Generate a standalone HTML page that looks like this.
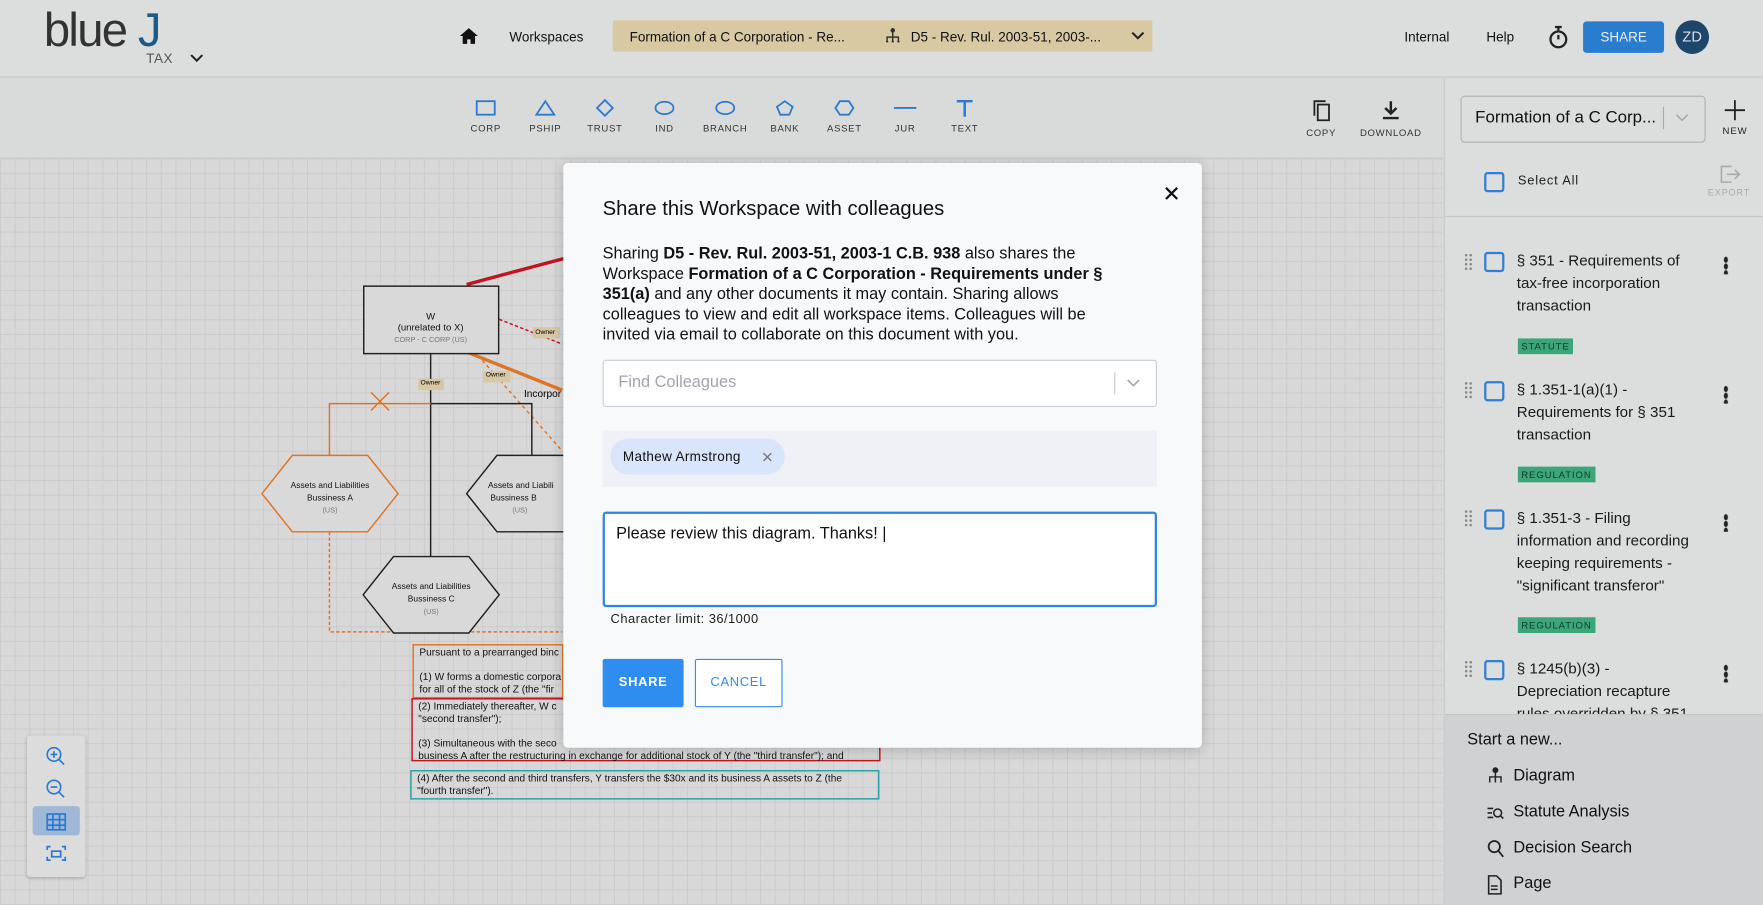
<!DOCTYPE html>
<html><head><meta charset="utf-8"><style>
*{box-sizing:border-box;margin:0;padding:0}
html,body{width:1763px;height:905px;overflow:hidden;background:#d9dada;font-family:"Liberation Sans",sans-serif}
#w{position:absolute;left:0;top:0;width:1568px;height:805px;transform:scale(1.12436);transform-origin:0 0;background:#d9dada}
.a{position:absolute}
.hdr{left:0;top:0;width:1568px;height:69px;background:#dcdddd;border-bottom:1px solid #c6c7c8}
.t{font-size:12px;color:#111}
.tb{left:0;top:70px;width:1283px;height:71px;background:#d9dada;border-bottom:1px solid #ccc}
.canvas{left:0;top:141px;width:1283px;height:664px;background-color:#d8d8d8;background-image:linear-gradient(#cbcbcb 1px,transparent 1px),linear-gradient(90deg,#cbcbcb 1px,transparent 1px);background-size:13px 13px}
.tool{position:absolute;top:88px;width:50px;text-align:center;font-size:8.5px;letter-spacing:.6px;color:#333}
.tool svg{display:block;margin:0 auto 5px}
.rp{left:1284px;top:70px;width:284px;height:735px;background:#dcdddd;border-left:1px solid #c6c7c8}
.cb{position:absolute;width:18px;height:18px;border:2px solid #2f7fd6;border-radius:3px}
.it{position:absolute;left:1349px;font-size:13.5px;line-height:20px;color:#1a1a1a;width:160px}
.tag{position:absolute;left:1350px;font-size:8.5px;letter-spacing:.8px;padding:2px 3px;background:#3aa67a;color:#0e3a2a}
.dots{position:absolute;left:1302px;width:8px;height:16px;background-image:radial-gradient(#888 1px,transparent 1.3px);background-size:4px 4px}
.kb{position:absolute;left:1533px;width:4px;height:16px;background-image:radial-gradient(#222 1.6px,transparent 2px);background-size:4px 6px}
.modal{left:501px;top:145px;width:568px;height:520px;background:#f8f9fb;border-radius:4px;box-shadow:0 2px 12px rgba(0,0,0,.2)}
.sm{font-size:7.5px;color:#111;text-align:center}
.box{position:absolute;font-size:9px;color:#111;line-height:11px;padding:2px 6px;overflow:hidden;white-space:nowrap}
</style></head><body><div id="w">
<div class="a hdr"></div>
<div class="a" style="left:39px;top:3px;font-size:42px;letter-spacing:-1.5px;color:#333">blue <span style="color:#1e5a86">J</span></div>
<div class="a" style="left:130px;top:45px;font-size:12px;color:#555;letter-spacing:.5px">TAX</div>
<svg class="a" style="left:169px;top:48px" width="12" height="8"><path d="M1 1l5 5 5-5" stroke="#222" stroke-width="1.8" fill="none"/></svg>
<svg class="a" style="left:408px;top:24px" width="18" height="16"><path d="M9 1L1 8h2.5v7h4v-4h3v4h4V8H17z" fill="#111"/></svg>
<div class="a t" style="left:453px;top:26px">Workspaces</div>
<div class="a" style="left:545px;top:18px;width:480px;height:28px;background:#d9c9a3;border-radius:2px"></div>
<div class="a t" style="left:560px;top:26px">Formation of a C Corporation - Re...</div>
<svg class="a" style="left:786px;top:24px" width="16" height="16"><path d="M8 1v5M3 13V9h10v4M8 6v7M2 13h2M7 13h2M12 13h2" stroke="#333" stroke-width="1.3" fill="none"/><circle cx="8" cy="3" r="2" fill="#333"/></svg>
<div class="a t" style="left:810px;top:26px">D5 - Rev. Rul. 2003-51, 2003-...</div>
<svg class="a" style="left:1006px;top:28px" width="12" height="8"><path d="M1 1l5 5 5-5" stroke="#222" stroke-width="1.8" fill="none"/></svg>
<div class="a t" style="left:1249px;top:26px">Internal</div>
<div class="a t" style="left:1322px;top:26px">Help</div>
<svg class="a" style="left:1376px;top:22px" width="20" height="22"><path d="M7 2h6M10 2v3" stroke="#222" stroke-width="2"/><circle cx="10" cy="13" r="7" stroke="#222" stroke-width="2" fill="none"/><path d="M10 13V9" stroke="#222" stroke-width="2"/></svg>
<div class="a" style="left:1408px;top:19px;width:72px;height:28px;background:#2a7ccf;border-radius:3px;color:#e8f0fa;font-size:12px;text-align:center;line-height:28px">SHARE</div>
<div class="a" style="left:1490px;top:18px;width:30px;height:30px;border-radius:50%;background:#1c466a;color:#dde;font-size:13px;text-align:center;line-height:30px">ZD</div>

<div class="a tb"></div>
<div class="a canvas"></div>
<div class="tool" style="left:407px"><svg width="20" height="16"><rect x="2" y="2" width="16" height="12" stroke="#2a7bd0" stroke-width="1.6" fill="none"/></svg>CORP</div>
<div class="tool" style="left:460px"><svg width="20" height="16"><path d="M10 2L2 14h16z" stroke="#2a7bd0" stroke-width="1.6" fill="none"/></svg>PSHIP</div>
<div class="tool" style="left:513px"><svg width="20" height="16"><path d="M10 1l7 7-7 7-7-7z" stroke="#2a7bd0" stroke-width="1.6" fill="none"/></svg>TRUST</div>
<div class="tool" style="left:566px"><svg width="20" height="16"><ellipse cx="10" cy="8" rx="8" ry="5.5" stroke="#2a7bd0" stroke-width="1.6" fill="none"/></svg>IND</div>
<div class="tool" style="left:620px"><svg width="20" height="16"><ellipse cx="10" cy="8" rx="8" ry="5.5" stroke="#2a7bd0" stroke-width="1.6" fill="none"/></svg>BRANCH</div>
<div class="tool" style="left:673px"><svg width="20" height="16"><path d="M10 2l7 5-3 7H6L3 7z" stroke="#2a7bd0" stroke-width="1.6" fill="none"/></svg>BANK</div>
<div class="tool" style="left:726px"><svg width="20" height="16"><path d="M6 2h8l4 6-4 6H6L2 8z" stroke="#2a7bd0" stroke-width="1.6" fill="none"/></svg>ASSET</div>
<div class="tool" style="left:780px"><svg width="22" height="16"><path d="M1 8h20" stroke="#2a7bd0" stroke-width="1.6"/></svg>JUR</div>
<div class="tool" style="left:833px"><svg width="20" height="16"><path d="M3 2h14M10 2v14" stroke="#2a7bd0" stroke-width="2.2"/></svg>TEXT</div>
<div class="tool" style="left:1150px"><svg width="20" height="20"><rect x="7" y="5" width="10" height="14" stroke="#222" stroke-width="1.6" fill="none"/><path d="M4 15V2h10" stroke="#222" stroke-width="1.6" fill="none"/></svg>COPY</div>
<div class="tool" style="left:1207px;width:60px"><svg width="20" height="20"><path d="M10 2v10M5 8l5 5 5-5M3 17h14" stroke="#222" stroke-width="2.2" fill="none"/></svg>DOWNLOAD</div>

<svg class="a" style="left:0;top:141px" width="1283" height="664">
<path d="M415 112L505 88" stroke="#c0141f" stroke-width="3"/>
<path d="M444 143L500 165" stroke="#c0141f" stroke-width="1.3" stroke-dasharray="3 2"/>
<path d="M415 172L500 206" stroke="#e07426" stroke-width="3"/>
<path d="M425 175L500 260" stroke="#e07426" stroke-width="1.3" stroke-dasharray="3 3"/>
<path d="M383 173V354M383 218H473V264" stroke="#222" stroke-width="1.3" fill="none"/>
<path d="M383 218H293V264" stroke="#e07426" stroke-width="1.3" fill="none"/>
<path d="M330 208l16 16M346 208l-16 16" stroke="#e07426" stroke-width="1.3"/>
<path d="M293 327V421H500" stroke="#e07426" stroke-width="1.3" stroke-dasharray="3 2" fill="none"/>
<rect x="323.5" y="113.5" width="120" height="60" fill="#d9d9d9" stroke="#222" stroke-width="1.3"/>
<path d="M260 264h67l27 34-27 34h-67l-27-34z" fill="#d9d9d9" stroke="#e07426" stroke-width="1.3"/>
<path d="M442 264h60v68h-60l-27-34z" fill="#d9d9d9" stroke="#222" stroke-width="1.3"/>
<path d="M350 354h67l27 34-27 34h-67l-27-34z" fill="#d9d9d9" stroke="#222" stroke-width="1.3"/>
<rect x="474" y="150" width="24" height="10" fill="#d6c8a3"/>
<rect x="372" y="196" width="23" height="10" fill="#d6c8a3"/>
<rect x="430" y="189" width="24" height="10" fill="#d6c8a3"/>
<rect x="367.5" y="432.5" width="133" height="47" fill="none" stroke="#e07426" stroke-width="1.3"/>
<rect x="366.5" y="480.5" width="416" height="55" fill="none" stroke="#c0141f" stroke-width="1.3"/>
<rect x="365.5" y="544.5" width="416" height="25" fill="none" stroke="#2aa0a8" stroke-width="1.3"/>
</svg>
<div class="a sm" style="left:323px;top:276px;width:120px;font-size:8.5px;line-height:10px">W<br>(unrelated to X)<br><span style="font-size:6.5px;color:#777">CORP - C CORP (US)</span></div>
<div class="a" style="left:476px;top:293px;font-size:6px">Owner</div>
<div class="a" style="left:374px;top:338px;font-size:6px">Owner</div>
<div class="a" style="left:432px;top:331px;font-size:6px">Owner</div>
<div class="a" style="left:466px;top:345px;font-size:9px">Incorpor</div>
<div class="a sm" style="left:233px;top:426px;width:121px;line-height:11px">Assets and Liabilities<br>Bussiness A<br><span style="font-size:6.5px;color:#777">(US)</span></div>
<div class="a sm" style="left:414px;top:426px;width:118px;line-height:11px;text-align:left;padding-left:20px">Assets and Liabili<br>&nbsp;Bussiness B<br><span style="font-size:6.5px;color:#777">&nbsp;&nbsp;&nbsp;&nbsp;&nbsp;&nbsp;&nbsp;&nbsp;&nbsp;&nbsp;&nbsp;&nbsp;(US)</span></div>
<div class="a sm" style="left:323px;top:516px;width:121px;line-height:11px">Assets and Liabilities<br>Bussiness C<br><span style="font-size:6.5px;color:#777">(US)</span></div>
<div class="box" style="left:367px;top:573px;width:133px">Pursuant to a prearranged binc<br><br>(1) W forms a domestic corpora<br>for all of the stock of Z (the "fir</div>
<div class="box" style="left:366px;top:621px;width:416px">(2) Immediately thereafter, W c<br>"second transfer");<br><br>(3) Simultaneous with the seco<br>business A after the restructuring in exchange for additional stock of Y (the "third transfer"); and</div>
<div class="box" style="left:365px;top:685px;width:416px">(4) After the second and third transfers, Y transfers the $30x and its business A assets to Z (the<br>"fourth transfer").</div>

<div class="a" style="left:24px;top:654px;width:52px;height:126px;background:#dcdcdc;border-radius:3px;box-shadow:0 1px 3px rgba(0,0,0,.2)"></div>
<div class="a" style="left:29px;top:717px;width:42px;height:26px;background:#9fb8d8;border-radius:3px"></div>
<svg class="a" style="left:38px;top:662px" width="24" height="112" fill="none" stroke="#2a7bd0" stroke-width="1.5"><circle cx="10" cy="9" r="6"/><path d="M14 13l5 5M7 9h6M10 6v6"/><circle cx="10" cy="38" r="6"/><path d="M14 42l5 5M7 38h6"/><rect x="4" y="62" width="16" height="14"/><path d="M4 67h16M4 72h16M9 62v14M15 62v14"/><path d="M4 94v-3h3M17 91h3v3M20 100v3h-3M7 103H4v-3"/><rect x="8" y="95" width="8" height="5"/></svg>

<div class="a rp"></div>
<div class="a" style="left:1299px;top:85px;width:218px;height:42px;border:1.5px solid #b0b1b8;border-radius:4px;background:#dcdddd"></div>
<div class="a" style="left:1312px;top:96px;font-size:15px;color:#111">Formation of a C Corp...</div>
<div class="a" style="left:1479px;top:95px;width:1px;height:20px;background:#aaa"></div>
<svg class="a" style="left:1490px;top:101px" width="12" height="8"><path d="M1 1l5 5 5-5" stroke="#aaa" stroke-width="1.5" fill="none"/></svg>
<svg class="a" style="left:1533px;top:88px" width="20" height="20"><path d="M10 1v18M1 10h18" stroke="#222" stroke-width="1.6"/></svg>
<div class="a" style="left:1532px;top:111px;font-size:8.5px;letter-spacing:.8px;color:#222">NEW</div>
<div class="cb" style="left:1320px;top:153px"></div>
<div class="a" style="left:1350px;top:155px;font-size:11.5px;letter-spacing:.7px;color:#222">Select All</div>
<svg class="a" style="left:1528px;top:145px" width="22" height="20" fill="none" stroke="#aaa" stroke-width="1.4"><path d="M12 3H3v14h9M8 10h11M15 6l4 4-4 4"/></svg>
<div class="a" style="left:1519px;top:167px;font-size:8px;letter-spacing:.8px;color:#aaa">EXPORT</div>
<div class="a" style="left:1285px;top:192px;width:283px;height:1px;background:#c6c7c8"></div>
<div class="dots" style="left:1302px;top:225px"></div><div class="cb" style="left:1320px;top:224px"></div>
<div class="it" style="top:222px">§ 351 - Requirements of tax-free incorporation transaction</div><div class="kb" style="top:228px"></div>
<div class="tag" style="top:301px">STATUTE</div>
<div class="dots" style="left:1302px;top:339px"></div><div class="cb" style="left:1320px;top:339px"></div>
<div class="it" style="top:337px">§ 1.351-1(a)(1) - Requirements for § 351 transaction</div><div class="kb" style="top:343px"></div>
<div class="tag" style="top:415px">REGULATION</div>
<div class="dots" style="left:1302px;top:453px"></div><div class="cb" style="left:1320px;top:453px"></div>
<div class="it" style="top:451px">§ 1.351-3 - Filing information and recording keeping requirements - "significant transferor"</div><div class="kb" style="top:457px"></div>
<div class="tag" style="top:549px">REGULATION</div>
<div class="dots" style="left:1302px;top:587px"></div><div class="cb" style="left:1320px;top:587px"></div>
<div class="it" style="top:585px;height:50px;overflow:hidden">§ 1245(b)(3) - Depreciation recapture rules overridden by § 351</div><div class="kb" style="top:591px"></div>
<div class="a" style="left:1285px;top:635px;width:283px;height:170px;background:#d0d1d2;border-top:1px solid #c4c5c6"></div>
<div class="a" style="left:1305px;top:650px;font-size:14.5px;color:#111">Start a new...</div>
<svg class="a" style="left:1322px;top:682px" width="16" height="16" fill="none" stroke="#222" stroke-width="1.3"><path d="M8 1v5M3 14V9h10v5M8 6v8"/><circle cx="8" cy="3" r="2" fill="#222"/></svg>
<div class="a" style="left:1346px;top:682px;font-size:14.5px;color:#111">Diagram</div>
<svg class="a" style="left:1322px;top:715px" width="16" height="16" fill="none" stroke="#222" stroke-width="1.4"><path d="M1 4h5M1 8h4M1 12h5"/><circle cx="10" cy="8" r="3.5"/><path d="M12.5 10.5L15 13"/></svg>
<div class="a" style="left:1346px;top:714px;font-size:14.5px;color:#111">Statute Analysis</div>
<svg class="a" style="left:1322px;top:746px" width="16" height="18" fill="none" stroke="#222" stroke-width="1.6"><circle cx="7" cy="7" r="5"/><path d="M10.5 10.5L15 16"/></svg>
<div class="a" style="left:1346px;top:746px;font-size:14.5px;color:#111">Decision Search</div>
<svg class="a" style="left:1322px;top:778px" width="14" height="18" fill="none" stroke="#222" stroke-width="1.4"><path d="M2 1h7l4 4v12H2z M4 10h6M4 13h6"/></svg>
<div class="a" style="left:1346px;top:778px;font-size:14.5px;color:#111">Page</div>

<div class="a modal"></div>
<svg class="a" style="left:1035px;top:165px" width="14" height="14"><path d="M2 2l10 10M12 2L2 12" stroke="#111" stroke-width="2"/></svg>
<div class="a" style="left:536px;top:175px;font-size:18px;color:#111">Share this Workspace with colleagues</div>
<div class="a" style="left:536px;top:217px;width:475px;font-size:14.5px;line-height:18px;color:#111">Sharing <b>D5 - Rev. Rul. 2003-51, 2003-1 C.B. 938</b> also shares the Workspace <b>Formation of a C Corporation - Requirements under § 351(a)</b> and any other documents it may contain. Sharing allows colleagues to view and edit all workspace items. Colleagues will be invited via email to collaborate on this document with you.</div>
<div class="a" style="left:536px;top:320px;width:493px;height:42px;border:1.5px solid #ccced6;border-radius:3px;background:#fff"></div>
<div class="a" style="left:550px;top:332px;font-size:14.5px;color:#a0a4ae">Find Colleagues</div>
<div class="a" style="left:991px;top:331px;width:1px;height:20px;background:#ccc"></div>
<svg class="a" style="left:1002px;top:337px" width="12" height="8"><path d="M1 1l5 5 5-5" stroke="#aaa" stroke-width="1.5" fill="none"/></svg>
<div class="a" style="left:536px;top:383px;width:493px;height:50px;background:#eff1f6"></div>
<div class="a" style="left:543px;top:390px;width:155px;height:32px;background:#d8e5fb;border-radius:16px"></div>
<div class="a" style="left:554px;top:399px;font-size:12px;color:#111;letter-spacing:.3px">Mathew Armstrong</div>
<svg class="a" style="left:678px;top:402px" width="9" height="9"><path d="M1 1l7 7M8 1L1 8" stroke="#777" stroke-width="1.2"/></svg>
<div class="a" style="left:536px;top:455px;width:493px;height:85px;border:2px solid #2f84e8;border-radius:3px;background:#fff"></div>
<div class="a" style="left:548px;top:467px;font-size:14.5px;color:#111">Please review this diagram. Thanks! <span style="font-weight:100">|</span></div>
<div class="a" style="left:543px;top:545px;font-size:11.5px;color:#222;letter-spacing:.4px">Character limit: 36/1000</div>
<div class="a" style="left:536px;top:586px;width:72px;height:43px;background:#2f8def;border-radius:2px;color:#fff;font-size:11.5px;font-weight:bold;letter-spacing:.6px;text-align:center;line-height:43px">SHARE</div>
<div class="a" style="left:618px;top:586px;width:78px;height:43px;border:1px solid #2f8def;border-radius:2px;background:#fff;color:#2f8def;font-size:11.5px;letter-spacing:.6px;text-align:center;line-height:41px">CANCEL</div>
</div></body></html>
